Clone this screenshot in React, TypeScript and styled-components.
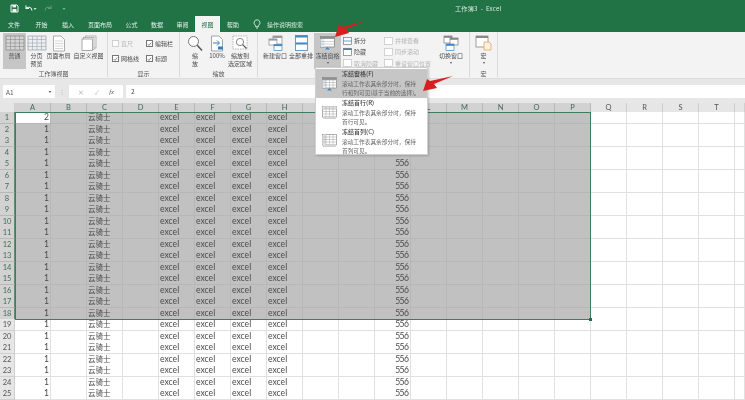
import React from "react";
import styled, { createGlobalStyle } from "styled-components";

const Global = createGlobalStyle`
  html, body { margin: 0; padding: 0; background: #fff; }
  * { box-sizing: border-box; }
`;

const CJK = `"Noto Sans CJK SC", "Noto Sans", sans-serif`;
const GREEN = "#217346";

const Page = styled.div`
  position: relative;
  width: 745px;
  height: 400px;
  overflow: hidden;
  display: flex;
  flex-direction: column;
  font-family: ${CJK};
  color: #444;
  filter: blur(0.35px);
`;

/* ---------- title + tabs ---------- */
const Header = styled.div`
  height: 32px;
  flex: none;
  background: ${GREEN};
  display: flex;
  flex-direction: column;
`;
const TitleBar = styled.div`
  height: 16px;
  display: flex;
  align-items: center;
  padding: 1px 0 0 10px;
  position: relative;
`;
const QuickGap = styled.div<{ $w: number }>`
  width: ${(p) => p.$w}px;
  flex: none;
`;
const DocTitle = styled.div`
  margin-left: 389px;
  color: #dfeae4;
  font-size: 6.2px;
  letter-spacing: 0.15px;
  white-space: pre;
`;
const TabBar = styled.div`
  height: 16px;
  display: flex;
  align-items: stretch;
`;
const Tab = styled.div<{ $w: number; $active?: boolean }>`
  width: ${(p) => p.$w}px;
  flex: none;
  display: flex;
  align-items: center;
  justify-content: center;
  font-size: 6px;
  color: ${(p) => (p.$active ? GREEN : "#e4efe9")};
  background: ${(p) => (p.$active ? "#f3f3f3" : "transparent")};
`;
const SearchTab = styled.div`
  display: flex;
  align-items: center;
  gap: 6px;
  margin-left: 7px;
  font-size: 6px;
  color: #d7e6de;
`;

/* ---------- ribbon ---------- */
const Ribbon = styled.div`
  height: 47px;
  flex: none;
  display: flex;
  background: #f3f3f3;
  border-bottom: 1px solid #dcdcdc;
`;
const Group = styled.div<{ $w: number }>`
  position: relative;
  width: ${(p) => p.$w}px;
  flex: none;
  border-right: 1px solid #dadada;
  margin-bottom: 1px;
  padding-top: 1px;
`;
const GroupRow = styled.div<{ $pad?: number }>`
  display: flex;
  padding-left: ${(p) => p.$pad ?? 0}px;
  height: 36px;
`;
const GroupLabel = styled.div`
  height: 9px;
  line-height: 9px;
  margin-top: 0;
  text-align: center;
  font-size: 6px;
  color: #555;
`;
const BigButton = styled.div<{ $w: number; $active?: boolean }>`
  width: ${(p) => p.$w}px;
  flex: none;
  display: flex;
  flex-direction: column;
  align-items: center;
  background: ${(p) => (p.$active ? "#c6c6c6" : "transparent")};
  padding-top: 2px;
`;
const IconSlot = styled.div`
  height: 16px;
  display: flex;
  align-items: center;
  justify-content: center;
`;
const BigLabel = styled.div`
  margin-top: 1px;
  font-size: 6px;
  line-height: 8px;
  text-align: center;
  white-space: pre;
  color: #4a4a4a;
`;
const Caret = styled.div`
  width: 0;
  height: 0;
  margin-top: 2px;
  border-left: 1.5px solid transparent;
  border-right: 1.5px solid transparent;
  border-top: 2px solid #555;
`;
const CheckGrid = styled.div`
  display: grid;
  grid-template-columns: 34px 34px;
  grid-auto-rows: 15px;
  padding: 3px 0 0 4px;
  height: 36px;
`;
const CheckItem = styled.div<{ $off?: boolean }>`
  display: flex;
  align-items: center;
  gap: 2px;
  font-size: 6px;
  color: ${(p) => (p.$off ? "#b9b9b9" : "#4a4a4a")};
`;
const CheckBox = styled.div<{ $off?: boolean }>`
  width: 7px;
  height: 7px;
  flex: none;
  background: #fff;
  border: 0.7px solid ${(p) => (p.$off ? "#cfcfcf" : "#777")};
  display: flex;
  align-items: center;
  justify-content: center;
`;
const SmallColumn = styled.div<{ $w: number }>`
  width: ${(p) => p.$w}px;
  flex: none;
  display: flex;
  flex-direction: column;
  padding-top: 2px;
`;
const SmallItem = styled.div<{ $off?: boolean }>`
  height: 11.5px;
  display: flex;
  align-items: center;
  gap: 2px;
  font-size: 6px;
  color: ${(p) => (p.$off ? "#b5b5b5" : "#4a4a4a")};
`;

/* ---------- formula bar ---------- */
const FormulaBar = styled.div`
  height: 24px;
  flex: none;
  background: #e7e7e7;
  display: flex;
  padding: 6px 0 5px 3px;
`;
const NameBox = styled.div`
  width: 52px;
  background: #fff;
  display: flex;
  align-items: center;
  justify-content: space-between;
  padding: 0 3px;
  font-size: 6.5px;
  color: #555;
`;
const Dots = styled.div`
  width: 14px;
  flex: none;
  color: #aaa;
  font-size: 6px;
  text-align: center;
  line-height: 13px;
`;
const FxBox = styled.div`
  width: 54px;
  flex: none;
  background: #fff;
  display: flex;
  align-items: center;
  justify-content: space-around;
  padding: 0 4px;
  font-size: 6.5px;
  color: #bdbdbd;
`;
const FxLabel = styled.span`
  color: #555;
  font-style: italic;
  font-family: "Liberation Serif", serif;
`;
const FormulaInput = styled.div`
  flex: 1;
  margin-left: 3px;
  background: #fff;
  font-size: 6.5px;
  line-height: 13px;
  padding-left: 5px;
  color: #444;
`;

/* ---------- sheet ---------- */
const Sheet = styled.div`
  position: relative;
  flex: 1;
  overflow: hidden;
  background: #fff;
`;
const HeaderRow = styled.div`
  display: grid;
  grid-template-columns: 15px repeat(20, 36px) 1fr;
  height: 9px;
`;
const Corner = styled.div`
  background: #e6e6e6;
  border-right: 1px solid #d0d0d0;
  border-bottom: 1px solid #c9c9c9;
`;
const ColHead = styled.div<{ $sel?: boolean }>`
  background: ${(p) => (p.$sel ? "#d2d2d2" : "#e6e6e6")};
  border-right: 1px solid ${(p) => (p.$sel ? "#b8b8b8" : "#cfcfcf")};
  border-bottom: 1px solid ${(p) => (p.$sel ? "#5f8f75" : "#c9c9c9")};
  font-family: "Lato", sans-serif;
  font-size: 7.5px;
  line-height: 9px;
  text-align: center;
  color: ${(p) => (p.$sel ? "#3f6b53" : "#555")};
`;
const Row = styled.div`
  display: grid;
  grid-template-columns: 15px repeat(20, 36px) 1fr;
  height: 11.52px;
`;
const RowHead = styled.div<{ $sel?: boolean }>`
  background: ${(p) => (p.$sel ? "#d2d2d2" : "#e6e6e6")};
  border-right: 1px solid ${(p) => (p.$sel ? "#5f8f75" : "#cfcfcf")};
  border-bottom: 1px solid ${(p) => (p.$sel ? "#b8b8b8" : "#d0d0d0")};
  font-family: "Lato", sans-serif;
  font-size: 7.5px;
  line-height: 11px;
  text-align: center;
  color: ${(p) => (p.$sel ? "#3f6b53" : "#555")};
`;
const Cell = styled.div<{ $sel?: boolean; $active?: boolean; $right?: boolean }>`
  background: ${(p) => (p.$active ? "#fff" : p.$sel ? "#c1c1c1" : "#fff")};
  border-right: 1px solid ${(p) => (p.$sel ? "#b7b7b7" : "#e0e0e0")};
  border-bottom: 1px solid ${(p) => (p.$sel ? "#b7b7b7" : "#e0e0e0")};
  font-family: "Lato", ${CJK};
  font-size: 8.6px;
  line-height: 10.5px;
  letter-spacing: ${(p) => (p.$right ? "-0.55px" : "0")};
  white-space: nowrap;
  overflow: hidden;
  color: #4a4a4a;
  padding: 0 1.5px 0 1px;
  text-align: ${(p) => (p.$right ? "right" : "left")};
`;
const CjkText = styled.span`
  font-family: ${CJK};
  font-size: 7.5px;
`;
const SelectionFrame = styled.div`
  position: absolute;
  left: 15px;
  top: 9px;
  width: 576px;
  height: 208px;
  border: 1px solid #3f7d5c;
  pointer-events: none;
`;
const FillHandle = styled.div`
  position: absolute;
  right: -2px;
  bottom: -2px;
  width: 3px;
  height: 3px;
  background: #2c6a49;
`;

/* ---------- freeze menu ---------- */
const Menu = styled.div`
  position: absolute;
  left: 315px;
  top: 67px;
  width: 113px;
  height: 88px;
  background: #fff;
  border: 1px solid #cfcfcf;
  box-shadow: 1px 1px 2px rgba(0, 0, 0, 0.18);
  padding-top: 1px;
`;
const MenuItem = styled.div<{ $active?: boolean; $h: number }>`
  height: ${(p) => p.$h}px;
  display: flex;
  background: ${(p) => (p.$active ? "#c6c6c6" : "transparent")};
`;
const MenuIcon = styled.div`
  width: 26px;
  flex: none;
  display: flex;
  align-items: center;
  justify-content: center;
`;
const MenuText = styled.div`
  flex: 1;
`;
const MenuTitle = styled.div`
  font-size: 6px;
  line-height: 9.5px;
  font-weight: 500;
  color: #3d3d3d;
`;
const MenuDesc = styled.div`
  font-size: 5.7px;
  line-height: 9.2px;
  white-space: pre;
  color: #666;
`;
const ArrowLayer = styled.svg`
  position: absolute;
  left: 0;
  top: 0;
  pointer-events: none;
`;

/* ---------- icons ---------- */
const GridIcon = ({ w = 20, h = 16, fill = "#fff", line = "#9a9a9a" }: { w?: number; h?: number; fill?: string; line?: string }) => (
  <svg width={w} height={h} viewBox="0 0 20 16">
    <rect x="1" y="1" width="18" height="14" fill={fill} stroke={line} strokeWidth="0.8" />
    {[4.5, 8, 11.5].map((y) => <line key={y} x1="1" x2="19" y1={y} y2={y} stroke={line} strokeWidth="0.6" />)}
    {[5.5, 10, 14.5].map((x) => <line key={x} x1={x} x2={x} y1="1" y2="15" stroke={line} strokeWidth="0.6" />)}
  </svg>
);
const PageIcon = () => (
  <svg width="14" height="17" viewBox="0 0 14 17">
    <path d="M1.5 1h7.5l3.5 3.5V16h-11z" fill="#fff" stroke="#9a9a9a" strokeWidth="0.8" />
    {[6, 8.5, 11, 13.5].map((y) => <line key={y} x1="3" x2="11" y1={y} y2={y} stroke="#c4c4c4" strokeWidth="0.7" />)}
  </svg>
);
const StackIcon = () => (
  <svg width="16" height="16" viewBox="0 0 16 16">
    <rect x="4.5" y="1" width="10.5" height="12" fill="#f8f8f8" stroke="#999" strokeWidth="0.7" />
    <rect x="2.5" y="2.5" width="10.5" height="12" fill="#fbfbfb" stroke="#999" strokeWidth="0.7" />
    <rect x="1" y="4" width="10.5" height="11.5" fill="#fff" stroke="#888" strokeWidth="0.7" />
  </svg>
);
const LensIcon = () => (
  <svg width="16" height="17" viewBox="0 0 16 17">
    <circle cx="6.5" cy="6.5" r="5" fill="#fff" stroke="#777" strokeWidth="1" />
    <line x1="10.2" y1="10.2" x2="15" y2="15.5" stroke="#555" strokeWidth="1.5" />
  </svg>
);
const HundredIcon = () => (
  <svg width="14" height="17" viewBox="0 0 14 17">
    <path d="M1.5 1h7.5l3.5 3.5V16h-11z" fill="#fff" stroke="#8f8f8f" strokeWidth="0.8" />
    <path d="M3 8h6M7 5.5 9.5 8 7 10.5" fill="none" stroke="#2f7fc4" strokeWidth="1" />
    <rect x="8" y="11.5" width="5" height="3" fill="#2f7fc4" />
  </svg>
);
const ZoomSelIcon = () => (
  <svg width="17" height="16" viewBox="0 0 17 16">
    <rect x="1" y="1" width="14" height="13" fill="#fff" stroke="#999" strokeWidth="0.7" strokeDasharray="1.5 1" />
    <circle cx="8" cy="7" r="3.6" fill="#fff" stroke="#666" strokeWidth="0.8" />
    <line x1="10.6" y1="9.6" x2="14.5" y2="13.5" stroke="#555" strokeWidth="1.2" />
  </svg>
);
const NewWindowIcon = () => (
  <svg width="15" height="16" viewBox="0 0 15 16">
    <rect x="5" y="1" width="9" height="8" fill="#fff" stroke="#888" strokeWidth="0.7" />
    <rect x="5" y="1" width="9" height="2" fill="#9a9a9a" />
    <rect x="1" y="4" width="8" height="6" fill="#fff" stroke="#888" strokeWidth="0.7" />
    <rect x="1" y="4" width="8" height="1.6" fill="#9a9a9a" />
    <rect x="6" y="9.5" width="8" height="6" fill="#fff" stroke="#3f87c6" strokeWidth="0.7" />
    <rect x="6" y="9.5" width="8" height="1.6" fill="#3f87c6" />
  </svg>
);
const ArrangeIcon = () => (
  <svg width="13" height="16" viewBox="0 0 13 16">
    <rect x="0.5" y="0.5" width="12" height="15" fill="#fff" stroke="#3f87c6" strokeWidth="0.8" />
    <rect x="0.5" y="0.5" width="12" height="2" fill="#3f87c6" />
    <rect x="0.5" y="7.5" width="12" height="2" fill="#3f87c6" />
  </svg>
);
const FreezeIcon = () => (
  <svg width="15" height="14" viewBox="0 0 15 14">
    <rect x="0.5" y="0.5" width="14" height="10.5" fill="#fff" stroke="#777" strokeWidth="0.7" />
    <rect x="0.5" y="0.5" width="14" height="2.4" fill="#8d8d8d" />
    <rect x="0.5" y="3" width="4" height="8" fill="#dfeaf4" />
    {[5.5, 8].map((y) => <line key={y} x1="1" x2="14" y1={y} y2={y} stroke="#aaa" strokeWidth="0.5" />)}
    <path d="M5 13.5 7.5 11 10 13.5" fill="#3f87c6" />
  </svg>
);
const MenuGrid = ({ kind }: { kind: "pane" | "row" | "col" }) => (
  <svg width="15" height="14" viewBox="0 0 15 14">
    <rect x="0.5" y="0.5" width="14" height="10.5" fill="#fff" stroke="#777" strokeWidth="0.6" />
    {kind === "pane" && <rect x="0.5" y="0.5" width="14" height="2.4" fill="#8d8d8d" />}
    {kind === "pane" && <rect x="0.5" y="3" width="3.5" height="8" fill="#dfeaf4" />}
    {kind === "pane" && <path d="M5 13.5 7.5 11 10 13.5" fill="#3f87c6" />}
    {kind === "row" && <rect x="0.5" y="0.5" width="14" height="2.6" fill="#e4e4e4" />}
    {kind === "col" && <rect x="0.5" y="0.5" width="3.5" height="10.5" fill="#e4e4e4" />}
    {kind !== "pane" && <line x1="1" x2="14" y1="12.5" y2="12.5" stroke="#999" strokeWidth="0.45" />}
    {[3, 5.5, 8].map((y) => <line key={y} x1="1" x2="14" y1={y} y2={y} stroke="#999" strokeWidth="0.45" />)}
    {[4, 7.5, 11].map((x) => <line key={x} x1={x} x2={x} y1="1" y2="11" stroke="#999" strokeWidth="0.45" />)}
  </svg>
);
const SwitchIcon = () => (
  <svg width="16" height="16" viewBox="0 0 16 16">
    <rect x="1" y="1" width="8" height="7" fill="#fff" stroke="#777" strokeWidth="0.7" />
    <rect x="1" y="1" width="8" height="1.8" fill="#888" />
    <rect x="7" y="3" width="8" height="7" fill="#fff" stroke="#777" strokeWidth="0.7" />
    <rect x="7" y="3" width="8" height="1.8" fill="#888" />
    <rect x="3" y="9" width="8" height="6.5" fill="#fff" stroke="#3f87c6" strokeWidth="0.7" />
    <rect x="3" y="9" width="8" height="1.8" fill="#3f87c6" />
  </svg>
);
const MacroIcon = () => (
  <svg width="17" height="16" viewBox="0 0 17 16">
    <rect x="1" y="1" width="12" height="11" fill="#fff" stroke="#777" strokeWidth="0.7" />
    <rect x="1" y="1" width="12" height="2" fill="#888" />
    <path d="M9 7h5l2 2v6H9z" fill="#fdf1e2" stroke="#e8a25a" strokeWidth="0.8" />
  </svg>
);
const MiniIcon = ({ off, bar }: { off?: boolean; bar?: "top" | "mid" }) => (
  <svg width="9" height="8" viewBox="0 0 9 8">
    <rect x="0.5" y="0.5" width="8" height="7" fill="#fff" stroke={off ? "#c4c4c4" : "#777"} strokeWidth="0.7" />
    {bar === "top" && <rect x="0.5" y="0.5" width="8" height="1.4" fill="#3f6f9c" />}
    {bar === "mid" && <line x1="0.5" x2="8.5" y1="4" y2="4" stroke="#3f87c6" strokeWidth="0.8" />}
  </svg>
);
const Tick = () => (
  <svg width="6" height="6" viewBox="0 0 6 6">
    <path d="M1 3.2 2.4 4.6 5 1.4" fill="none" stroke="#444" strokeWidth="0.8" />
  </svg>
);
const SaveIcon = () => (
  <svg width="9" height="9" viewBox="0 0 9 9">
    <path d="M1 1h6l1 1v6H1z" fill="none" stroke="#f1f6f3" strokeWidth="1" />
    <rect x="2.5" y="1" width="3.5" height="2.4" fill="#f1f6f3" />
    <rect x="2.5" y="5" width="4" height="3" fill="#f1f6f3" />
  </svg>
);
const UndoIcon = ({ color, flip }: { color: string; flip?: boolean }) => (
  <svg width="9" height="9" viewBox="0 0 9 9" style={flip ? { transform: "scaleX(-1)" } : undefined}>
    <path d="M2 1.5v3h3M2.3 4.5C3.5 2.6 7.5 2.6 8 6.5" fill="none" stroke={color} strokeWidth="1.1" />
  </svg>
);
const Down = ({ color }: { color: string }) => (
  <svg width="4" height="4" viewBox="0 0 4 4"><path d="M0.5 1h3L2 3z" fill={color} /></svg>
);
const Bulb = () => (
  <svg width="8" height="10" viewBox="0 0 8 10">
    <path d="M4 .8a3 3 0 0 0-1.6 5.5V7.6h3.2V6.3A3 3 0 0 0 4 .8z" fill="none" stroke="#eef5f1" strokeWidth=".8" />
    <line x1="3" x2="5" y1="9" y2="9" stroke="#eef5f1" strokeWidth=".8" />
  </svg>
);

/* ---------- data ---------- */
const COLS = "ABCDEFGHIJKLMNOPQRST".split("");
const ROWS = Array.from({ length: 25 }, (_, i) => i + 1);
const TABS: [string, number, boolean?][] = [
  ["文件", 28], ["开始", 27], ["插入", 26], ["页面布局", 38], ["公式", 25], ["数据", 26], ["审阅", 25], ["视图", 25, true], ["帮助", 26],
];
const EXCEL_COLS = new Set(["E", "F", "G", "H"]);

const cellText = (col: string, row: number) => {
  if (col === "A") return row === 1 ? "2" : "1";
  if (col === "C") return <CjkText>云骑士</CjkText>;
  if (EXCEL_COLS.has(col)) return "excel";
  if (col === "K" && row > 3) return "556";
  return "";
};

const Big = ({ w, label, icon, active, caret }: { w: number; label: string; icon: React.ReactNode; active?: boolean; caret?: boolean }) => (
  <BigButton $w={w} $active={active}>
    <IconSlot>{icon}</IconSlot>
    <BigLabel>{label}</BigLabel>
    {caret && <Caret />}
  </BigButton>
);

const Check = ({ label, off }: { label: string; off?: boolean }) => (
  <CheckItem $off={off}>
    <CheckBox $off={off}>{!off && <Tick />}</CheckBox>
    {label}
  </CheckItem>
);

export default function App() {
  return (
    <Page>
      <Global />
      <Header>
        <TitleBar>
          <SaveIcon />
          <QuickGap $w={5} />
          <UndoIcon color="#f1f6f3" />
          <Down color="#dbe8e1" />
          <QuickGap $w={7} />
          <UndoIcon color="#5f9c7d" flip />
          <QuickGap $w={9} />
          <Down color="#7fb298" />
          <DocTitle>工作簿3  -  Excel</DocTitle>
        </TitleBar>
        <TabBar>
          {TABS.map(([t, w, a]) => <Tab key={t} $w={w} $active={a}>{t}</Tab>)}
          <SearchTab><Bulb />操作说明搜索</SearchTab>
        </TabBar>
      </Header>

      <Ribbon>
        <Group $w={108}>
          <GroupRow $pad={3}>
            <Big w={23} active label="普通" icon={<GridIcon fill="#d4d4d4" line="#8c8c8c" />} />
            <Big w={21} label={"分页\n预览"} icon={<GridIcon fill="#e9eff4" line="#a5a5a5" />} />
            <Big w={23} label="页面布局" icon={<PageIcon />} />
            <Big w={37} label="自定义视图" icon={<StackIcon />} />
          </GroupRow>
          <GroupLabel>工作簿视图</GroupLabel>
        </Group>
        <Group $w={72}>
          <CheckGrid>
            <Check off label="直尺" />
            <Check label="编辑栏" />
            <Check label="网格线" />
            <Check label="标题" />
          </CheckGrid>
          <GroupLabel>显示</GroupLabel>
        </Group>
        <Group $w={78}>
          <GroupRow $pad={4}>
            <Big w={22} label={"缩\n放"} icon={<LensIcon />} />
            <Big w={22} label="100%" icon={<HundredIcon />} />
            <Big w={24} label={"缩放到\n选定区域"} icon={<ZoomSelIcon />} />
          </GroupRow>
          <GroupLabel>缩放</GroupLabel>
        </Group>
        <Group $w={212}>
          <GroupRow $pad={4}>
            <Big w={26} label="新建窗口" icon={<NewWindowIcon />} />
            <Big w={26} label="全部重排" icon={<ArrangeIcon />} />
            <Big w={27} active caret label="冻结窗格" icon={<FreezeIcon />} />
            <QuickGap $w={2} />
            <SmallColumn $w={41}>
              <SmallItem><MiniIcon bar="mid" />拆分</SmallItem>
              <SmallItem><MiniIcon bar="top" />隐藏</SmallItem>
              <SmallItem $off><MiniIcon off />取消隐藏</SmallItem>
            </SmallColumn>
            <SmallColumn $w={53}>
              <SmallItem $off><MiniIcon off />并排查看</SmallItem>
              <SmallItem $off><MiniIcon off />同步滚动</SmallItem>
              <SmallItem $off><MiniIcon off />重设窗口位置</SmallItem>
            </SmallColumn>
            <Big w={28} caret label="切换窗口" icon={<SwitchIcon />} />
          </GroupRow>
        </Group>
        <Group $w={28}>
          <GroupRow>
            <Big w={27} caret label="宏" icon={<MacroIcon />} />
          </GroupRow>
          <GroupLabel>宏</GroupLabel>
        </Group>
      </Ribbon>

      <FormulaBar>
        <NameBox>A1<Down color="#666" /></NameBox>
        <Dots>⋮</Dots>
        <FxBox>
          <span>✕</span>
          <span>✓</span>
          <FxLabel>fx</FxLabel>
        </FxBox>
        <FormulaInput>2</FormulaInput>
      </FormulaBar>

      <Sheet>
        <HeaderRow>
          <Corner />
          {COLS.map((c, i) => <ColHead key={c} $sel={i < 16}>{c}</ColHead>)}
          <ColHead />
        </HeaderRow>
        {ROWS.map((r) => (
          <Row key={r}>
            <RowHead $sel={r <= 18}>{r}</RowHead>
            {COLS.map((c, i) => {
              const sel = r <= 18 && i < 16;
              return (
                <Cell key={c} $sel={sel} $active={r === 1 && c === "A"} $right={c === "A" || c === "K"}>
                  {cellText(c, r)}
                </Cell>
              );
            })}
            <Cell />
          </Row>
        ))}
        <SelectionFrame><FillHandle /></SelectionFrame>
      </Sheet>

      <Menu>
        <MenuItem $active $h={29}>
          <MenuIcon><MenuGrid kind="pane" /></MenuIcon>
          <MenuText>
            <MenuTitle>冻结窗格(F)</MenuTitle>
            <MenuDesc>{"滚动工作表其余部分时，保持\n行和列可见(基于当前的选择)。"}</MenuDesc>
          </MenuText>
        </MenuItem>
        <MenuItem $h={29}>
          <MenuIcon><MenuGrid kind="row" /></MenuIcon>
          <MenuText>
            <MenuTitle>冻结首行(R)</MenuTitle>
            <MenuDesc>{"滚动工作表其余部分时，保持\n首行可见。"}</MenuDesc>
          </MenuText>
        </MenuItem>
        <MenuItem $h={28}>
          <MenuIcon><MenuGrid kind="col" /></MenuIcon>
          <MenuText>
            <MenuTitle>冻结首列(C)</MenuTitle>
            <MenuDesc>{"滚动工作表其余部分时，保持\n首列可见。"}</MenuDesc>
          </MenuText>
        </MenuItem>
      </Menu>

      <ArrowLayer width="745" height="400" viewBox="0 0 745 400">
        <path d="M365 21 346 29 349 33 335 37 339 24 342 27Z" fill="#d6201f" />
        <path d="M453 76 434 84 437 88 423 91 427 79 430 81Z" fill="#d6201f" />
      </ArrowLayer>
    </Page>
  );
}
